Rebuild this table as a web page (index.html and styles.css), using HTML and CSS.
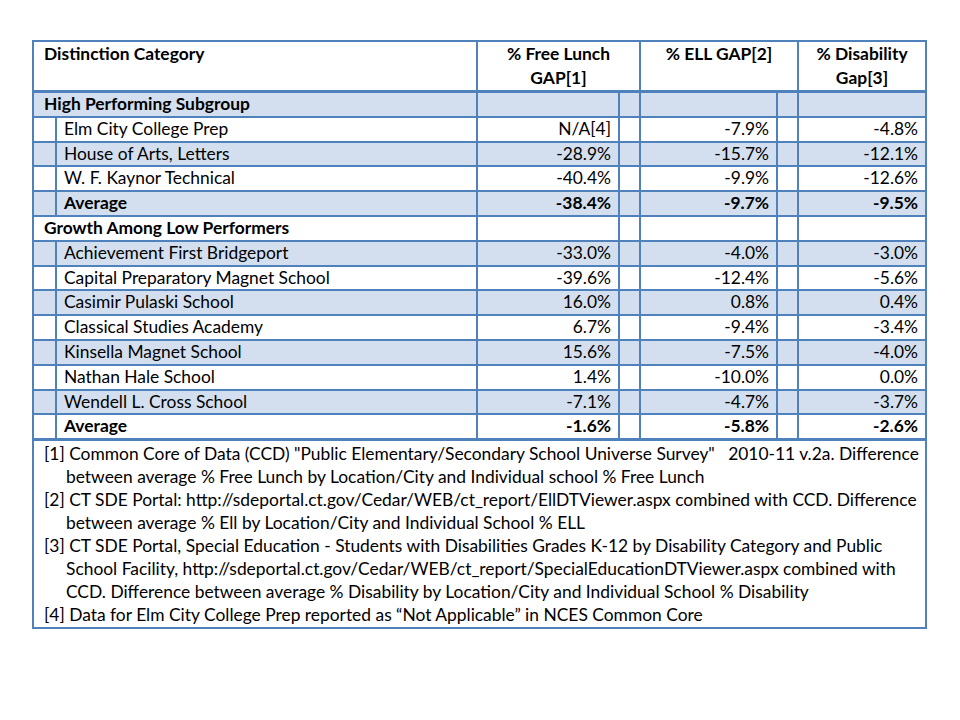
FILE: index.html
```html
<!DOCTYPE html>
<html>
<head>
<meta charset="utf-8">
<link rel="stylesheet" href="styles.css">
</head>
<body>
<div class="page">
<table class="gap">
<colgroup>
<col class="c-ind"><col class="c-name"><col class="c-fl"><col class="c-sp"><col class="c-ell"><col class="c-sp"><col class="c-dis">
</colgroup>
<thead>
<tr>
<th colspan="2" class="h-cat">Distinction Category</th>
<th colspan="2">% Free Lunch<br>GAP[1]</th>
<th colspan="2">% ELL GAP[2]</th>
<th>% Disability<br>Gap[3]</th>
</tr>
</thead>
<tbody>
<tr class="band group"><td colspan="2">High Performing Subgroup</td><td></td><td></td><td></td><td></td><td></td></tr>
<tr><td></td><td class="name">Elm City College Prep</td><td class="num">N/A[4]</td><td></td><td class="num">-7.9%</td><td></td><td class="num">-4.8%</td></tr>
<tr class="band"><td></td><td class="name">House of Arts, Letters</td><td class="num">-28.9%</td><td></td><td class="num">-15.7%</td><td></td><td class="num">-12.1%</td></tr>
<tr><td></td><td class="name">W. F. Kaynor Technical</td><td class="num">-40.4%</td><td></td><td class="num">-9.9%</td><td></td><td class="num">-12.6%</td></tr>
<tr class="band avg"><td></td><td class="name">Average</td><td class="num">-38.4%</td><td></td><td class="num">-9.7%</td><td></td><td class="num">-9.5%</td></tr>
<tr class="group"><td colspan="2">Growth Among Low Performers</td><td></td><td></td><td></td><td></td><td></td></tr>
<tr class="band"><td></td><td class="name">Achievement First Bridgeport</td><td class="num">-33.0%</td><td></td><td class="num">-4.0%</td><td></td><td class="num">-3.0%</td></tr>
<tr><td></td><td class="name">Capital Preparatory Magnet School</td><td class="num">-39.6%</td><td></td><td class="num">-12.4%</td><td></td><td class="num">-5.6%</td></tr>
<tr class="band"><td></td><td class="name">Casimir Pulaski School</td><td class="num">16.0%</td><td></td><td class="num">0.8%</td><td></td><td class="num">0.4%</td></tr>
<tr><td></td><td class="name">Classical Studies Academy</td><td class="num">6.7%</td><td></td><td class="num">-9.4%</td><td></td><td class="num">-3.4%</td></tr>
<tr class="band"><td></td><td class="name">Kinsella Magnet School</td><td class="num">15.6%</td><td></td><td class="num">-7.5%</td><td></td><td class="num">-4.0%</td></tr>
<tr><td></td><td class="name">Nathan Hale School</td><td class="num">1.4%</td><td></td><td class="num">-10.0%</td><td></td><td class="num">0.0%</td></tr>
<tr class="band"><td></td><td class="name">Wendell L. Cross School</td><td class="num">-7.1%</td><td></td><td class="num">-4.7%</td><td></td><td class="num">-3.7%</td></tr>
<tr class="avg"><td></td><td class="name">Average</td><td class="num">-1.6%</td><td></td><td class="num">-5.8%</td><td></td><td class="num">-2.6%</td></tr>
<tr class="foot">
<td colspan="7">
<div class="fn">[1] Common Core of Data (CCD) "Public Elementary/Secondary School Universe Survey" &nbsp;&nbsp;2010-11 v.2a. Difference<br>between average % Free Lunch by Location/City and Individual school % Free Lunch</div>
<div class="fn">[2] CT SDE Portal: http://sdeportal.ct.gov/Cedar/WEB/ct_report/EllDTViewer.aspx combined with CCD. Difference<br>between average % Ell by Location/City and Individual School % ELL</div>
<div class="fn">[3] CT SDE Portal, Special Education - Students with Disabilities Grades K-12 by Disability Category and Public<br>School Facility, http://sdeportal.ct.gov/Cedar/WEB/ct_report/SpecialEducationDTViewer.aspx combined with<br>CCD. Difference between average % Disability by Location/City and Individual School % Disability</div>
<div class="fn">[4] Data for Elm City College Prep reported as “Not Applicable” in NCES Common Core</div>
</td>
</tr>
</tbody>
</table>
</div>
</body>
</html>
```

FILE: styles.css
```css
body {
  margin: 0;
  background: #ffffff;
  color: #000000;
  font-family: Lato, "Open Sans", sans-serif;
}

.page {
  padding: 40px 0 0 32px;
}

.gap {
  border-collapse: collapse;
  table-layout: fixed;
  width: 893px;
  font-size: 17.4px;
}

.c-ind { width: 23px; }
.c-name { width: 421px; }
.c-fl { width: 142px; }
.c-sp { width: 21px; }
.c-ell { width: 137px; }
.c-dis { width: 128px; }

.gap td,
.gap th {
  border: 2px solid #4f81bd;
  padding: 0;
  line-height: 22.8px;
  height: 22.8px;
  white-space: nowrap;
  overflow: hidden;
}

.gap thead th {
  font-weight: bold;
  vertical-align: top;
  text-align: center;
  line-height: 24px;
  height: 45px;
  padding-top: 0;
  border-bottom-width: 3px;
}

.gap thead .h-cat {
  text-align: left;
  padding-left: 10px;
}

.gap .band td {
  background: #d3dfee;
}

.gap .group td:first-child {
  font-weight: bold;
  padding-left: 10px;
}

.gap .name {
  padding-left: 7px;
}

.gap .num {
  text-align: right;
  padding-right: 7px;
}

.gap .avg td {
  font-weight: bold;
}

.gap .foot td {
  border-top-width: 3px;
  padding: 1px 10px 1px 10px;
  line-height: 23px;
  height: auto;
}

.fn {
  padding-left: 22px;
  text-indent: -22px;
  white-space: nowrap;
}
```
